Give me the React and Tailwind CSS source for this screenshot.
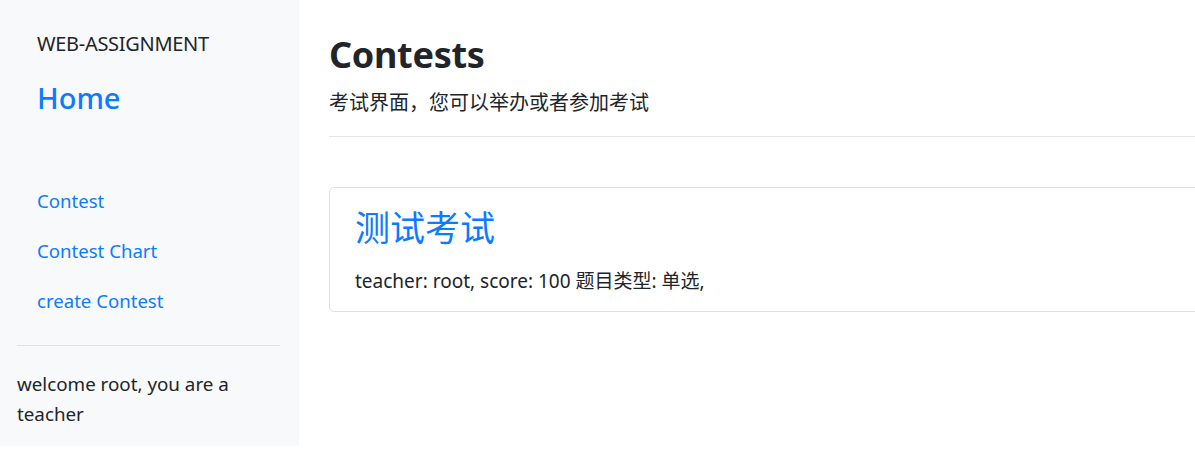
export default function App() {
  const font = { fontFamily: '"Noto Sans", "Noto Sans CJK SC", sans-serif' };
  return (
    <div className="flex w-[1195px] h-[466px] bg-white text-[#212529] overflow-hidden" style={font}>
      <aside className="w-[299px] h-[446px] shrink-0 bg-[#f8f9fa] pl-[17px] pr-[19px] flex flex-col">
        <div className="pl-[20px] pt-[29px]">
          <div className="text-[20px] leading-[30px] tracking-[-0.3px]">WEB-ASSIGNMENT</div>
          <div className="mt-[19px] text-[29px] leading-[40px] font-medium text-[#0d7bff]">Home</div>
        </div>
        <nav className="mt-[58px] flex flex-col pl-[20px]">
          <a className="h-[50px] flex items-center text-[18.6px] text-[#0d7bff]">Contest</a>
          <a className="h-[50px] flex items-center text-[18.6px] text-[#0d7bff]">Contest Chart</a>
          <a className="h-[50px] flex items-center text-[18.6px] text-[#0d7bff]">create Contest</a>
        </nav>
        <hr className="mt-[19px] border-0 border-t border-[#dee2e6]" />
        <div className="mt-[23px] text-[18.8px] leading-[30px] w-[240px]">welcome root, you are a teacher</div>
      </aside>
      <main className="flex-1 pl-[30px] pt-[29px] min-w-0">
        <h1 className="text-[36px] leading-[52px] font-bold tracking-[-0.3px]">Contests</h1>
        <p className="mt-[7px] text-[20px] leading-[30px]">考试界面，您可以举办或者参加考试</p>
        <hr className="mt-[18px] w-[1000px] border-0 border-t border-[#e5e5e5]" />
        <div className="mt-[50px] w-[1000px] h-[125px] border border-[#dfdfdf] rounded-[5px] px-[25px] pt-[15px]">
          <div className="text-[35px] leading-[50px] text-[#0d7bff]">测试考试</div>
          <div className="mt-[14px] text-[19px] leading-[28px]">teacher: root, score: 100 题目类型: 单选,</div>
        </div>
      </main>
    </div>
  );
}
